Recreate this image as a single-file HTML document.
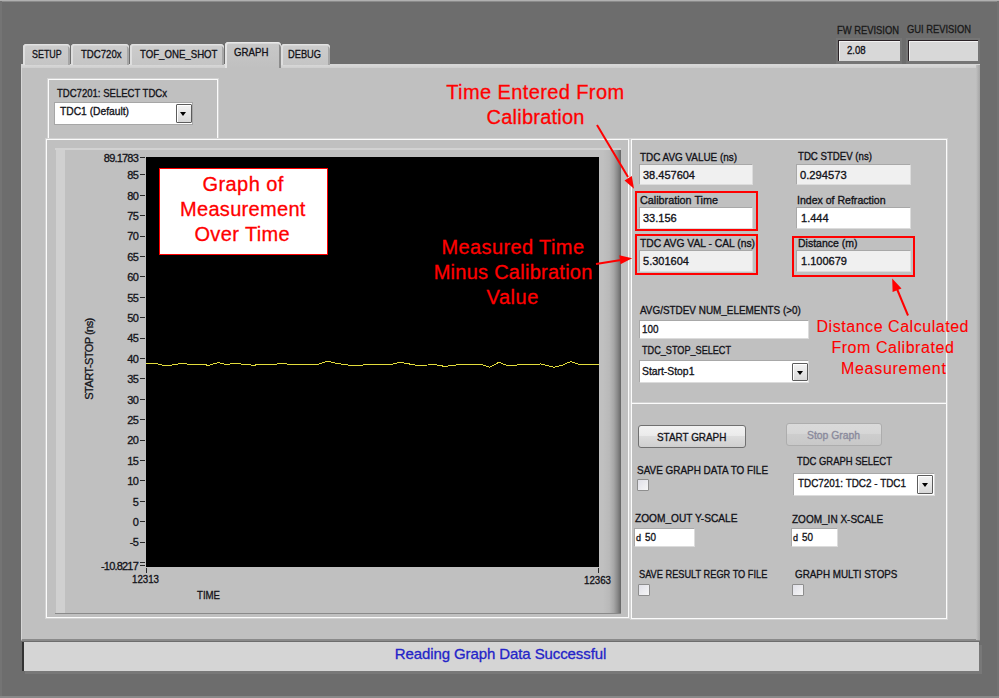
<!DOCTYPE html>
<html><head><meta charset="utf-8">
<style>
html,body{margin:0;padding:0;}
body{width:999px;height:698px;background:#6d6d6d;position:relative;overflow:hidden;font-family:"Liberation Sans",sans-serif;}
.a{position:absolute;box-sizing:border-box;}
.t{position:absolute;white-space:pre;line-height:1;font-family:"Liberation Sans",sans-serif;}
.lb{transform-origin:0 0;-webkit-text-stroke:0.35px currentColor;}
.ytl{left:90px;width:48px;text-align:right;font-size:11px;letter-spacing:-0.8px;color:#121218;-webkit-text-stroke:0.3px #121218;}
</style></head><body>
<div class="a" style="left:0;top:0;width:999px;height:1px;background:#b0b0b0;"></div>
<div class="a" style="left:0;top:1px;width:999px;height:1px;background:#8a8a8a;"></div>
<div class="a" style="left:0;top:1px;width:2px;height:697px;background:#747474;"></div>
<div class="a" style="left:997px;top:1px;width:2px;height:697px;background:#727272;"></div>
<div class="a" style="left:0;top:696px;width:999px;height:2px;background:#888;"></div>
<!-- tab panel -->
<div class="a" style="left:21px;top:64px;width:959px;height:577px;background:#c0c0c0;border-left:1px solid #d6d6d6;border-top:1px solid #d6d6d6;border-bottom:2px solid #8a8a8a;"></div>
<div class="a" style="left:22px;top:65px;width:958px;height:3px;background:linear-gradient(#d8d8d8,#cecece);"></div>
<div class="a" style="left:976px;top:65px;width:4px;height:575px;background:linear-gradient(90deg,#c0c0c0,#a4a4a4);"></div>
<!-- tabs -->
<div class="a" style="left:23px;top:44px;width:47px;height:21px;background:linear-gradient(#cdcdcd,#c5c5c5);border-radius:4px 4px 0 0;box-shadow:inset 2px 0 0 #dedede, inset 0 1px 0 #e2e2e2, inset 0 2px 0 #d6d6d6, inset -2px 0 0 #a6a6a6;"></div>
<div class="a" style="left:71px;top:44px;width:58px;height:21px;background:linear-gradient(#cdcdcd,#c5c5c5);border-radius:4px 4px 0 0;box-shadow:inset 2px 0 0 #dedede, inset 0 1px 0 #e2e2e2, inset 0 2px 0 #d6d6d6, inset -2px 0 0 #a6a6a6;"></div>
<div class="a" style="left:130px;top:44px;width:94px;height:21px;background:linear-gradient(#cdcdcd,#c5c5c5);border-radius:4px 4px 0 0;box-shadow:inset 2px 0 0 #dedede, inset 0 1px 0 #e2e2e2, inset 0 2px 0 #d6d6d6, inset -2px 0 0 #a6a6a6;"></div>
<div class="a" style="left:281px;top:44px;width:49px;height:21px;background:linear-gradient(#cdcdcd,#c5c5c5);border-radius:4px 4px 0 0;box-shadow:inset 2px 0 0 #dedede, inset 0 1px 0 #e2e2e2, inset 0 2px 0 #d6d6d6, inset -2px 0 0 #a6a6a6;"></div>
<div class="a" style="left:225px;top:42px;width:56px;height:26px;background:linear-gradient(#c8c8c8,#c0c0c0);border-radius:4px 4px 0 0;box-shadow:inset 2px 0 0 #e4e4e4, inset 0 1px 0 #e8e8e8, inset 0 2px 0 #dadada, inset -2px 0 0 #8c8c8c;"></div>

<!-- revision indicators -->
<div class="a" style="left:836px;top:38px;width:66px;height:26px;background:#757575;"></div><div class="a" style="left:838px;top:40px;width:62px;height:21px;background:#d8d8d8;border-top:1px solid #2a2226;border-left:1px solid #2a2226;box-shadow:inset 1px 1px 0 #f2f2f2;"></div>
<div class="a" style="left:906px;top:38px;width:74px;height:26px;background:#757575;"></div><div class="a" style="left:908px;top:40px;width:70px;height:21px;background:#d8d8d8;border-top:1px solid #2a2226;border-left:1px solid #2a2226;box-shadow:inset 1px 1px 0 #f2f2f2;"></div>
<!-- status bar -->
<div class="a" style="left:22px;top:642px;width:957px;height:29px;background:#d5d5d5;border-left:2px solid #333;box-shadow:3px 3px 0 #787878;"></div>

<!-- TDC7201 select group box -->
<div class="a" style="left:48px;top:79px;width:170px;height:60px;border:1px solid #fbfbfb;box-shadow:0 0 0 1px #d2d2d2;"></div>
<div class="a" style="left:54px;top:102px;width:139px;height:23px;background:#fff;border:1px solid #a6a6a6;"></div>
<div class="a" style="left:176px;top:104px;width:16px;height:19px;background:linear-gradient(#f4f4f4,#d8d8d8);border:1px solid #5c5c5c;border-radius:1px;box-shadow:inset 1px 1px 0 #fff;"></div>
<div class="a" style="left:180px;top:112px;width:0;height:0;border-left:3.5px solid transparent;border-right:3.5px solid transparent;border-top:4px solid #000;"></div>

<!-- graph group box -->
<div class="a" style="left:46px;top:139px;width:583px;height:479px;border:1px solid #fbfbfb;box-shadow:0 0 0 1px #d2d2d2;"></div>
<!-- graph frame -->
<div class="a" style="left:55px;top:148px;width:566px;height:466px;background:#c0c0c0;border-top:2px solid #d2d2d2;border-bottom:1px solid #8a8a8a;"></div>
<div class="a" style="left:56px;top:150px;width:9px;height:463px;background:#d0d0d0;"></div>
<div class="a" style="left:603px;top:150px;width:18px;height:463px;background:linear-gradient(90deg,#c0c0c0 0%,#b9b9b9 35%,#a6a6a6 60%,#8a8a8a 80%,#666 100%);"></div>
<!-- plot area -->
<div class="a" style="left:146px;top:157px;width:453px;height:410px;background:#000;"></div>
<svg class="a" style="left:0;top:0;" width="999" height="698" viewBox="0 0 999 698">
<g stroke="#2a2a2a" stroke-width="1">
<line x1="140" y1="157.5" x2="145" y2="157.5"/>
<line x1="140" y1="174.5" x2="145" y2="174.5"/>
<line x1="140" y1="195.5" x2="145" y2="195.5"/>
<line x1="140" y1="215.5" x2="145" y2="215.5"/>
<line x1="140" y1="236.5" x2="145" y2="236.5"/>
<line x1="140" y1="256.5" x2="145" y2="256.5"/>
<line x1="140" y1="276.5" x2="145" y2="276.5"/>
<line x1="140" y1="297.5" x2="145" y2="297.5"/>
<line x1="140" y1="317.5" x2="145" y2="317.5"/>
<line x1="140" y1="338.5" x2="145" y2="338.5"/>
<line x1="140" y1="358.5" x2="145" y2="358.5"/>
<line x1="140" y1="378.5" x2="145" y2="378.5"/>
<line x1="140" y1="399.5" x2="145" y2="399.5"/>
<line x1="140" y1="419.5" x2="145" y2="419.5"/>
<line x1="140" y1="440.5" x2="145" y2="440.5"/>
<line x1="140" y1="460.5" x2="145" y2="460.5"/>
<line x1="140" y1="480.5" x2="145" y2="480.5"/>
<line x1="140" y1="501.5" x2="145" y2="501.5"/>
<line x1="140" y1="521.5" x2="145" y2="521.5"/>
<line x1="140" y1="542.5" x2="145" y2="542.5"/>
<line x1="140" y1="565.5" x2="145" y2="565.5"/>
<line x1="140" y1="562.5" x2="145" y2="562.5"/>
<line x1="146.5" y1="568" x2="146.5" y2="573"/>
<line x1="598.5" y1="568" x2="598.5" y2="573"/>
</g>
<polyline fill="none" stroke="#e2dc3c" stroke-width="1" shape-rendering="crispEdges" points="146,364 153.2,363.3 158,364 165.2,366 173.6,364.7 183.2,363.3 188,364.3 203.7,364.3 208.5,365.5 218,362.6 226.5,364.5 236,363.3 241,364 253,365.2 262.5,364.5 269.7,365 281.7,363.3 289,364.3 296,365 308,364.3 317.8,364.3 327.4,361.2 335.8,363.3 344.2,364.5 355,366 365.8,364.7 380,364.3 391.6,364.3 400,362.3 408.4,363.8 415.6,365.2 427.7,365 433.7,364.3 444.5,366.4 456.5,365 468.5,364.3 480.5,364.3 489.4,367.2 499,362.3 508.6,366 521.3,364.5 529.8,364.5 540.6,364 553.8,367.2 562.2,365.2 570.6,361.6 579,364.3 598.5,364.3"/>
</svg>
<div class="t" style="left:44px;top:354px;width:90px;text-align:center;font-size:11px;letter-spacing:-0.55px;color:#121218;-webkit-text-stroke:0.3px #121218;transform:rotate(-90deg);transform-origin:45px 5px;">START-STOP (ns)</div>
<div class='t ytl' style='top:153.0px;'>89.1783</div>
<div class='t ytl' style='top:170.1px;'>85</div>
<div class='t ytl' style='top:190.5px;'>80</div>
<div class='t ytl' style='top:210.9px;'>75</div>
<div class='t ytl' style='top:231.3px;'>70</div>
<div class='t ytl' style='top:251.7px;'>65</div>
<div class='t ytl' style='top:272.1px;'>60</div>
<div class='t ytl' style='top:292.5px;'>55</div>
<div class='t ytl' style='top:312.9px;'>50</div>
<div class='t ytl' style='top:333.3px;'>45</div>
<div class='t ytl' style='top:353.7px;'>40</div>
<div class='t ytl' style='top:374.1px;'>35</div>
<div class='t ytl' style='top:394.5px;'>30</div>
<div class='t ytl' style='top:414.9px;'>25</div>
<div class='t ytl' style='top:435.3px;'>20</div>
<div class='t ytl' style='top:455.7px;'>15</div>
<div class='t ytl' style='top:476.1px;'>10</div>
<div class='t ytl' style='top:496.5px;'>5</div>
<div class='t ytl' style='top:516.9px;'>0</div>
<div class='t ytl' style='top:537.3px;'>-5</div>
<div class='t ytl' style='top:561.0px;'>-10.8217</div>

<!-- right group box -->
<div class="a" style="left:631px;top:139px;width:316px;height:480px;border:1px solid #fbfbfb;box-shadow:0 0 0 1px #d2d2d2;"></div>
<div class="a" style="left:632px;top:403px;width:314px;height:1px;background:#fbfbfb;"></div>
<div class="a" style="left:632px;top:402px;width:314px;height:1px;background:#d2d2d2;"></div>

<!-- indicators / controls -->
<div class="a" style="left:639px;top:164px;width:114px;height:21px;background:#f0f0f0;border:1px solid #a8a8a8;border-right-color:#dcdcdc;border-bottom-color:#dcdcdc;"></div>
<div class="a" style="left:796px;top:164px;width:115px;height:21px;background:#f0f0f0;border:1px solid #a8a8a8;border-right-color:#dcdcdc;border-bottom-color:#dcdcdc;"></div>
<div class="a" style="left:639px;top:207px;width:114px;height:22px;background:#fff;border:1px solid #a8a8a8;border-right-color:#dcdcdc;border-bottom-color:#dcdcdc;"></div>
<div class="a" style="left:796px;top:207px;width:115px;height:22px;background:#fff;border:1px solid #a8a8a8;border-right-color:#dcdcdc;border-bottom-color:#dcdcdc;"></div>
<div class="a" style="left:639px;top:250px;width:114px;height:22px;background:#f0f0f0;border:1px solid #a8a8a8;border-right-color:#dcdcdc;border-bottom-color:#dcdcdc;"></div>
<div class="a" style="left:796px;top:250px;width:115px;height:22px;background:#f0f0f0;border:1px solid #a8a8a8;border-right-color:#dcdcdc;border-bottom-color:#dcdcdc;"></div>
<!-- red boxes -->
<div class="a" style="left:635px;top:191px;width:123px;height:40px;border:2px solid #ff0000;"></div>
<div class="a" style="left:635px;top:234px;width:123px;height:41px;border:2px solid #ff0000;"></div>
<div class="a" style="left:792px;top:236px;width:123px;height:41px;border:2px solid #ff0000;"></div>

<div class="a" style="left:639px;top:320px;width:170px;height:19px;background:#fff;border:1px solid #a8a8a8;border-right-color:#dcdcdc;border-bottom-color:#dcdcdc;"></div>
<div class="a" style="left:639px;top:360px;width:170px;height:23px;background:#fff;border:1px solid #a8a8a8;border-right-color:#dcdcdc;border-bottom-color:#dcdcdc;"></div>
<div class="a" style="left:792px;top:363px;width:16px;height:18px;background:linear-gradient(#f4f4f4,#d8d8d8);border:1px solid #5c5c5c;border-radius:1px;box-shadow:inset 1px 1px 0 #fff;"></div>
<div class="a" style="left:796.5px;top:371px;width:0;height:0;border-left:3.5px solid transparent;border-right:3.5px solid transparent;border-top:4px solid #000;"></div>

<!-- buttons -->
<div class="a" style="left:638px;top:425px;width:108px;height:23px;border:1px solid #707070;border-radius:3px;background:linear-gradient(#f2f2f2 0%,#ebebeb 45%,#dddddd 50%,#cfcfcf 100%);"></div>
<div class="a" style="left:786px;top:423px;width:96px;height:23px;border:1px solid #adadad;border-radius:3px;background:linear-gradient(#dadada 0%,#d6d6d6 45%,#cdcdcd 50%,#c8c8c8 100%);"></div>

<div class="a" style="left:637px;top:479px;width:12px;height:12px;border:1px solid #8e8e8e;border-radius:1px;background:linear-gradient(135deg,#e0e0e8,#f6f6f6);"></div>
<div class="a" style="left:793px;top:473px;width:142px;height:23px;background:#fff;border:1px solid #a8a8a8;border-right-color:#dcdcdc;border-bottom-color:#dcdcdc;"></div>
<div class="a" style="left:917px;top:475px;width:16px;height:19px;background:linear-gradient(#f4f4f4,#d8d8d8);border:1px solid #5c5c5c;border-radius:1px;box-shadow:inset 1px 1px 0 #fff;"></div>
<div class="a" style="left:921.5px;top:483px;width:0;height:0;border-left:3.5px solid transparent;border-right:3.5px solid transparent;border-top:4px solid #000;"></div>

<div class="a" style="left:634px;top:528px;width:61px;height:19px;background:#fff;border:1px solid #a8a8a8;border-right-color:#dcdcdc;border-bottom-color:#dcdcdc;"></div>
<div class="a" style="left:791px;top:528px;width:47px;height:19px;background:#fff;border:1px solid #a8a8a8;border-right-color:#dcdcdc;border-bottom-color:#dcdcdc;"></div>
<div class="a" style="left:638px;top:584px;width:12px;height:12px;border:1px solid #8e8e8e;border-radius:1px;background:linear-gradient(135deg,#e0e0e8,#f6f6f6);"></div>
<div class="a" style="left:792px;top:584px;width:12px;height:12px;border:1px solid #8e8e8e;border-radius:1px;background:linear-gradient(135deg,#e0e0e8,#f6f6f6);"></div>

<div class='t lb' style='left:31.9px;top:49.0px;font-size:11.8px;letter-spacing:0px;transform:scaleX(0.755);color:#121218;'>SETUP</div>
<div class='t lb' style='left:80.9px;top:49.0px;font-size:11.8px;letter-spacing:0px;transform:scaleX(0.814);color:#121218;'>TDC720x</div>
<div class='t lb' style='left:139.5px;top:49.0px;font-size:11.8px;letter-spacing:0px;transform:scaleX(0.817);color:#121218;'>TOF_ONE_SHOT</div>
<div class='t lb' style='left:233.8px;top:47.4px;font-size:11.8px;letter-spacing:0px;transform:scaleX(0.820);color:#121218;'>GRAPH</div>
<div class='t lb' style='left:288.2px;top:49.0px;font-size:11.8px;letter-spacing:0px;transform:scaleX(0.786);color:#121218;'>DEBUG</div>
<div class='t lb' style='left:837.2px;top:24.8px;font-size:11.8px;letter-spacing:0px;transform:scaleX(0.795);color:#1a1a1a;'>FW REVISION</div>
<div class='t lb' style='left:907.2px;top:23.8px;font-size:11.8px;letter-spacing:0px;transform:scaleX(0.793);color:#1a1a1a;'>GUI REVISION</div>
<div class='t lb' style='left:846.7px;top:44.8px;font-size:11.8px;letter-spacing:0px;transform:scaleX(0.814);color:#121218;'>2.08</div>
<div class='t lb' style='left:56.7px;top:87.8px;font-size:11.8px;letter-spacing:0px;transform:scaleX(0.809);color:#121218;'>TDC7201: SELECT TDCx</div>
<div class='t lb' style='left:59.8px;top:106.4px;font-size:11.8px;letter-spacing:0px;transform:scaleX(0.870);color:#121218;'>TDC1 (Default)</div>
<div class='t lb' style='left:639.9px;top:151.6px;font-size:11.8px;letter-spacing:0px;transform:scaleX(0.839);color:#121218;'>TDC AVG VALUE (ns)</div>
<div class='t lb' style='left:797.7px;top:151.3px;font-size:11.8px;letter-spacing:0px;transform:scaleX(0.818);color:#121218;'>TDC STDEV (ns)</div>
<div class='t lb' style='left:642.8px;top:170.3px;font-size:11.8px;letter-spacing:0px;transform:scaleX(0.932);color:#121218;'>38.457604</div>
<div class='t lb' style='left:799.5px;top:170.3px;font-size:11.8px;letter-spacing:0px;transform:scaleX(0.949);color:#121218;'>0.294573</div>
<div class='t lb' style='left:640.2px;top:194.6px;font-size:11.8px;letter-spacing:0px;transform:scaleX(0.915);color:#121218;'>Calibration Time</div>
<div class='t lb' style='left:797.2px;top:194.6px;font-size:11.8px;letter-spacing:0px;transform:scaleX(0.894);color:#121218;'>Index of Refraction</div>
<div class='t lb' style='left:642.8px;top:213.3px;font-size:11.8px;letter-spacing:0px;transform:scaleX(0.933);color:#121218;'>33.156</div>
<div class='t lb' style='left:801.0px;top:213.3px;font-size:11.8px;letter-spacing:0px;transform:scaleX(0.935);color:#121218;'>1.444</div>
<div class='t lb' style='left:640.2px;top:237.8px;font-size:11.8px;letter-spacing:0px;transform:scaleX(0.873);color:#121218;'>TDC AVG VAL - CAL (ns)</div>
<div class='t lb' style='left:797.7px;top:237.8px;font-size:11.8px;letter-spacing:0px;transform:scaleX(0.890);color:#121218;'>Distance (m)</div>
<div class='t lb' style='left:642.8px;top:256.3px;font-size:11.8px;letter-spacing:0px;transform:scaleX(0.934);color:#121218;'>5.301604</div>
<div class='t lb' style='left:801.0px;top:256.3px;font-size:11.8px;letter-spacing:0px;transform:scaleX(0.934);color:#121218;'>1.100679</div>
<div class='t lb' style='left:639.6px;top:305.0px;font-size:11.8px;letter-spacing:0px;transform:scaleX(0.840);color:#121218;'>AVG/STDEV NUM_ELEMENTS (&gt;0)</div>
<div class='t lb' style='left:642.2px;top:324.3px;font-size:11.8px;letter-spacing:0px;transform:scaleX(0.838);color:#121218;'>100</div>
<div class='t lb' style='left:642.2px;top:344.7px;font-size:11.8px;letter-spacing:0px;transform:scaleX(0.773);color:#121218;'>TDC_STOP_SELECT</div>
<div class='t lb' style='left:642.2px;top:365.8px;font-size:11.8px;letter-spacing:0px;transform:scaleX(0.878);color:#121218;'>Start-Stop1</div>
<div class='t lb' style='left:657.2px;top:431.8px;font-size:11.8px;letter-spacing:0px;transform:scaleX(0.840);color:#121218;'>START GRAPH</div>
<div class='t lb' style='left:807.2px;top:429.8px;font-size:11.8px;letter-spacing:0px;transform:scaleX(0.878);color:#8a8a9c;'>Stop Graph</div>
<div class='t lb' style='left:636.8px;top:464.8px;font-size:11.8px;letter-spacing:0px;transform:scaleX(0.842);color:#121218;'>SAVE GRAPH DATA TO FILE</div>
<div class='t lb' style='left:796.8px;top:456.3px;font-size:11.8px;letter-spacing:0px;transform:scaleX(0.800);color:#121218;'>TDC GRAPH SELECT</div>
<div class='t lb' style='left:798.3px;top:477.6px;font-size:11.8px;letter-spacing:0px;transform:scaleX(0.839);color:#121218;'>TDC7201: TDC2 - TDC1</div>
<div class='t lb' style='left:635.0px;top:512.5px;font-size:11.8px;letter-spacing:0px;transform:scaleX(0.860);color:#121218;'>ZOOM_OUT Y-SCALE</div>
<div class='t lb' style='left:792.1px;top:513.8px;font-size:11.8px;letter-spacing:0px;transform:scaleX(0.849);color:#121218;'>ZOOM_IN X-SCALE</div>
<div class='t' style='left:635.9px;top:533.9px;font-size:9px;letter-spacing:0.00px;color:#121218;-webkit-text-stroke:0.3px #121218;'>d</div>
<div class='t lb' style='left:644.7px;top:532.3px;font-size:11.8px;letter-spacing:0px;transform:scaleX(0.837);color:#121218;'>50</div>
<div class='t' style='left:792.9px;top:533.9px;font-size:9px;letter-spacing:0.00px;color:#121218;-webkit-text-stroke:0.3px #121218;'>d</div>
<div class='t lb' style='left:801.7px;top:532.3px;font-size:11.8px;letter-spacing:0px;transform:scaleX(0.837);color:#121218;'>50</div>
<div class='t lb' style='left:638.9px;top:569.4px;font-size:11.8px;letter-spacing:0px;transform:scaleX(0.782);color:#121218;'>SAVE RESULT REGR TO FILE</div>
<div class='t lb' style='left:794.8px;top:569.4px;font-size:11.8px;letter-spacing:0px;transform:scaleX(0.834);color:#121218;'>GRAPH MULTI STOPS</div>
<div class='t lb' style='left:197.2px;top:589.8px;font-size:11.8px;letter-spacing:0px;transform:scaleX(0.816);color:#121218;'>TIME</div>
<div class='t lb' style='left:132.2px;top:574.4px;font-size:11.8px;letter-spacing:0px;transform:scaleX(0.823);color:#121218;'>12313</div>
<div class='t lb' style='left:584.2px;top:574.8px;font-size:11.8px;letter-spacing:0px;transform:scaleX(0.823);color:#121218;'>12363</div>
<div class='t' style='left:394.8px;top:646.0px;font-size:15px;letter-spacing:-0.10px;color:#2424c8;-webkit-text-stroke:0.3px #2424c8;'>Reading Graph Data Successful</div>

<!-- annotation white box -->
<div class="a" style="left:159px;top:168px;width:169px;height:87px;background:#fff;border:1.5px solid #ff0000;"></div>
<div class='t' style='left:446.2px;top:81.5px;font-size:20px;letter-spacing:0.40px;color:#ff0000;-webkit-text-stroke:0.3px #ff0000;'>Time Entered From</div>
<div class='t' style='left:486.6px;top:106.7px;font-size:20px;letter-spacing:0.22px;color:#ff0000;-webkit-text-stroke:0.3px #ff0000;'>Calibration</div>
<div class='t' style='left:441.4px;top:237.2px;font-size:20px;letter-spacing:0.40px;color:#ff0000;-webkit-text-stroke:0.3px #ff0000;'>Measured Time</div>
<div class='t' style='left:433.7px;top:262.1px;font-size:20px;letter-spacing:0.26px;color:#ff0000;-webkit-text-stroke:0.3px #ff0000;'>Minus Calibration</div>
<div class='t' style='left:486.6px;top:286.8px;font-size:20px;letter-spacing:0.51px;color:#ff0000;-webkit-text-stroke:0.3px #ff0000;'>Value</div>
<div class='t' style='left:202.4px;top:174.1px;font-size:20px;letter-spacing:0.45px;color:#ff0000;-webkit-text-stroke:0.3px #ff0000;'>Graph of</div>
<div class='t' style='left:180.0px;top:199.1px;font-size:20px;letter-spacing:0.31px;color:#ff0000;-webkit-text-stroke:0.3px #ff0000;'>Measurement</div>
<div class='t' style='left:194.4px;top:224.1px;font-size:20px;letter-spacing:0.39px;color:#ff0000;-webkit-text-stroke:0.3px #ff0000;'>Over Time</div>
<div class='t' style='left:816.5px;top:318.5px;font-size:16px;letter-spacing:0.54px;color:#ff0000;-webkit-text-stroke:0.1px #ff0000;'>Distance Calculated</div>
<div class='t' style='left:831.4px;top:339.5px;font-size:16px;letter-spacing:0.55px;color:#ff0000;-webkit-text-stroke:0.1px #ff0000;'>From Calibrated</div>
<div class='t' style='left:840.9px;top:360.5px;font-size:16px;letter-spacing:0.72px;color:#ff0000;-webkit-text-stroke:0.1px #ff0000;'>Measurement</div>

<!-- arrows -->
<svg class="a" style="left:0;top:0;" width="999" height="698" viewBox="0 0 999 698">
<g stroke="#ff0000" stroke-width="2" fill="#ff0000">
<line x1="597" y1="125" x2="628" y2="177"/>
<polygon stroke="none" points="634,188.8 624.5,180.5 631.8,176"/>
<line x1="596" y1="264" x2="621" y2="260"/>
<polygon stroke="none" points="632.2,258.3 619.3,255.3 620.5,264.2"/>
<line x1="908" y1="315.5" x2="897" y2="289"/>
<polygon stroke="none" points="892.2,278.5 892.6,292 901.5,288.5"/>
</g>
</svg>
</body></html>
